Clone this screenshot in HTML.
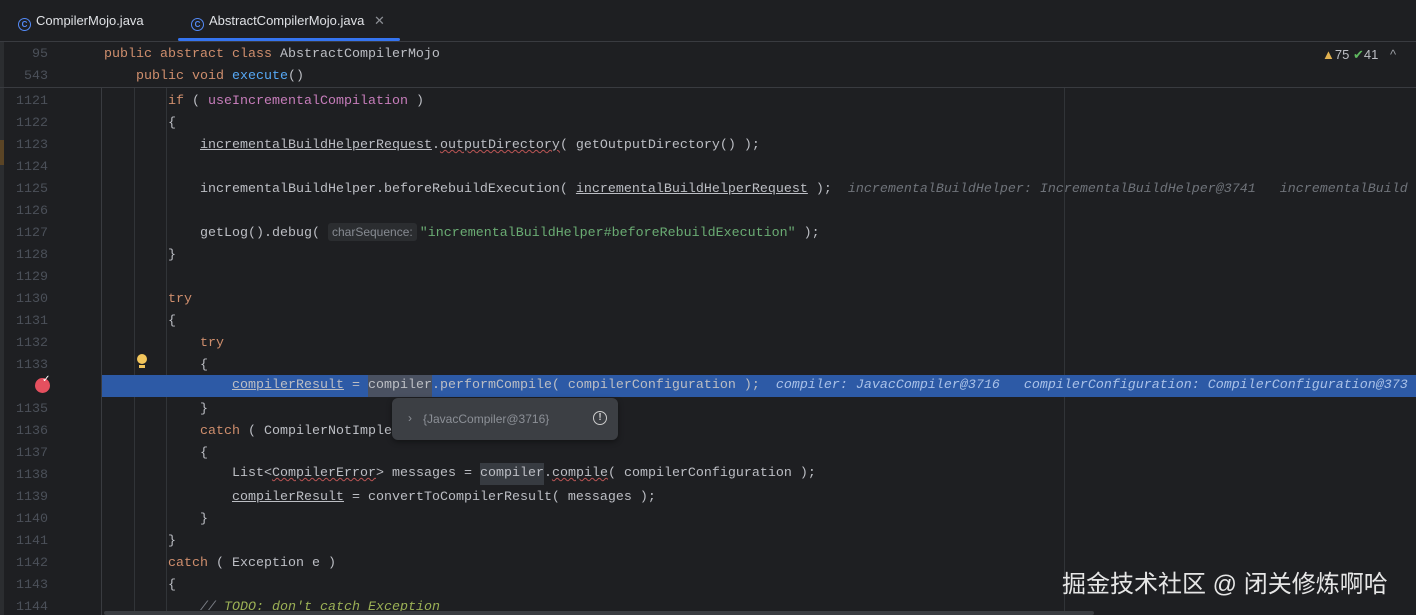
<!DOCTYPE html>
<html style="overflow:hidden"><head><meta charset="utf-8"><style>
body{margin:0;width:1416px;height:615px;overflow:hidden;background:#1e1f22;position:relative;font-family:"Liberation Mono",monospace;font-size:13.33px;color:#bcbec4}
.abs{position:absolute}
.tabs{left:0;top:0;width:1416px;height:41px;background:#1e1f22;border-bottom:1px solid #393b40;font-family:"Liberation Sans",sans-serif;font-size:13px;color:#dfe1e5}
.tab{position:absolute;top:13px;white-space:nowrap}
.ci{display:inline-block;width:11px;height:11px;border:1.3px solid #548af7;border-radius:50%;color:#548af7;font-size:8px;line-height:11px;text-align:center;vertical-align:-2px;margin-right:5px;font-weight:bold}
.ln{position:absolute;left:0;width:48px;text-align:right;color:#4b5059;height:22px;line-height:22px;margin-top:2px}
.l{position:absolute;left:104px;height:22px;line-height:22px;white-space:pre;margin-top:2px}
.k{color:#cf8e6d}.f{color:#c77dbb}.m{color:#56a8f5}.s{color:#6aab73}.u{text-decoration:underline;text-decoration-color:#bcbec4}
.w{text-decoration:underline wavy #b55;text-decoration-thickness:1px}
.h{color:#6f737a;font-style:italic}
.hl{color:#a9c1e8;font-style:italic}
.vl{position:absolute;width:1px;background:#313438}
.hint{display:inline-block;background:#2b2d30;color:#868a91;font-family:"Liberation Sans",sans-serif;font-size:12px;line-height:18px;padding:0 4px;border-radius:3px;margin-right:3px}
</style></head><body>
<div class="abs tabs">
 <div class="tab" style="left:18px"><span class="ci">C</span>CompilerMojo.java</div>
 <div class="tab" style="left:191px"><span class="ci">C</span>AbstractCompilerMojo.java <span style="color:#8b8e94;margin-left:6px">✕</span></div>
 <div class="abs" style="left:178px;top:38px;width:222px;height:3px;background:#3574f0;border-radius:2px"></div>
</div>
<div class="abs" style="left:0;top:42px;width:4px;height:573px;background:#2b2d30"></div>
<div class="abs" style="left:0;top:140px;width:4px;height:25px;background:#5a4425"></div>
<div class="ln" style="top:42px">95</div>
<div class="l" style="top:42px"><span class="k">public abstract class</span> AbstractCompilerMojo</div>
<div class="ln" style="top:64px">543</div>
<div class="l" style="top:64px;left:136px"><span class="k">public void</span> <span class="m">execute</span>()</div>
<div class="abs" style="left:0;top:87px;width:1416px;height:1px;background:#393b40"></div>
<div class="abs" style="left:1322px;top:47px;font-family:'Liberation Sans',sans-serif;font-size:13px;color:#bcbec4"><span style="color:#e0b050">▲</span>75 <span style="color:#5fb85f">✔</span>41 <span style="color:#9a9da3;margin-left:8px">^</span></div>
<div class="vl" style="left:101px;top:88px;height:527px;background:#393b40"></div>
<div class="vl" style="left:134px;top:88px;height:527px"></div>
<div class="vl" style="left:166px;top:88px;height:527px"></div>
<div class="vl" style="left:1064px;top:88px;height:527px"></div>
<div class="abs" style="left:102px;top:375px;width:1314px;height:22px;background:#2d5aa6"></div>
<div class="abs" style="left:368px;top:375px;width:64px;height:22px;background:#4a5161"></div>
<div class="abs" style="left:480px;top:463px;width:64px;height:22px;background:#373b41"></div>

<div class="ln" style="top:89px">1121</div><div class="l" style="top:89px;left:168px"><span class="k">if</span> ( <span class="f">useIncrementalCompilation</span> )</div>
<div class="ln" style="top:111px">1122</div><div class="l" style="top:111px;left:168px">{</div>
<div class="ln" style="top:133px">1123</div><div class="l" style="top:133px;left:200px"><span class="u">incrementalBuildHelperRequest</span>.<span class="w">outputDirectory</span>( getOutputDirectory() );</div>
<div class="ln" style="top:155px">1124</div>
<div class="ln" style="top:177px">1125</div><div class="l" style="top:177px;left:200px">incrementalBuildHelper.beforeRebuildExecution( <span class="u">incrementalBuildHelperRequest</span> );  <span class="h">incrementalBuildHelper: IncrementalBuildHelper@3741   incrementalBuild</span></div>
<div class="ln" style="top:199px">1126</div>
<div class="ln" style="top:221px">1127</div><div class="l" style="top:221px;left:200px">getLog().debug( <span class="hint">charSequence:</span><span class="s">"incrementalBuildHelper#beforeRebuildExecution"</span> );</div>
<div class="ln" style="top:243px">1128</div><div class="l" style="top:243px;left:168px">}</div>
<div class="ln" style="top:265px">1129</div>
<div class="ln" style="top:287px">1130</div><div class="l" style="top:287px;left:168px"><span class="k">try</span></div>
<div class="ln" style="top:309px">1131</div><div class="l" style="top:309px;left:168px">{</div>
<div class="ln" style="top:331px">1132</div><div class="l" style="top:331px;left:200px"><span class="k">try</span></div>
<div class="ln" style="top:353px">1133</div><div class="l" style="top:353px;left:200px">{</div>
<div class="abs" style="left:137px;top:354px;width:10px;height:10px;border-radius:50%;background:#f2c55c"></div>
<div class="abs" style="left:139px;top:365px;width:6px;height:3px;background:#f2c55c"></div>
<div class="abs" style="left:35px;top:378px;width:15px;height:15px;border-radius:50%;background:#e5505f"></div>
<div class="abs" style="left:42px;top:374px;color:#fff;font-size:10px;font-family:'DejaVu Sans',sans-serif">✓</div>
<div class="l" style="top:373px;left:232px"><span class="u">compilerResult</span> = compiler.performCompile( compilerConfiguration );  <span class="hl">compiler: JavacCompiler@3716   compilerConfiguration: CompilerConfiguration@373</span></div>
<div class="ln" style="top:397px">1135</div><div class="l" style="top:397px;left:200px">}</div>
<div class="ln" style="top:419px">1136</div><div class="l" style="top:419px;left:200px"><span class="k">catch</span> ( CompilerNotImplementedException cnie )</div>
<div class="ln" style="top:441px">1137</div><div class="l" style="top:441px;left:200px">{</div>
<div class="ln" style="top:463px">1138</div><div class="l" style="top:461px;left:232px">List&lt;<span class="w">CompilerError</span>&gt; messages = compiler.<span class="w">compile</span>( compilerConfiguration );</div>
<div class="ln" style="top:485px">1139</div><div class="l" style="top:485px;left:232px"><span class="u">compilerResult</span> = convertToCompilerResult( messages );</div>
<div class="ln" style="top:507px">1140</div><div class="l" style="top:507px;left:200px">}</div>
<div class="ln" style="top:529px">1141</div><div class="l" style="top:529px;left:168px">}</div>
<div class="ln" style="top:551px">1142</div><div class="l" style="top:551px;left:168px"><span class="k">catch</span> ( Exception e )</div>
<div class="ln" style="top:573px">1143</div><div class="l" style="top:573px;left:168px">{</div>
<div class="ln" style="top:595px">1144</div><div class="l" style="top:595px;left:200px;font-style:italic"><span style="color:#7a7e85">// </span><span style="color:#9bb055">TODO: don't catch Exception</span></div>
<div class="abs" style="left:392px;top:398px;width:226px;height:42px;background:#3c3f44;border-radius:6px;box-shadow:0 2px 6px rgba(0,0,0,.4);font-family:'Liberation Sans',sans-serif;font-size:12px;color:#8c9097">
 <span class="abs" style="left:16px;top:13px">›</span>
 <span class="abs" style="left:31px;top:14px">{JavacCompiler@3716}</span>
 <span class="abs" style="left:201px;top:13px;width:12px;height:12px;border:1.3px solid #ccc;border-radius:50%;color:#ccc;font-size:10px;line-height:12px;text-align:center;font-weight:bold">!</span>
</div>
<div class="abs" style="left:104px;top:611px;width:990px;height:4px;background:#3a3d41;border-radius:2px"></div>
<div class="abs" style="left:1062px;top:564px;font-family:'Liberation Sans','Noto Sans CJK SC',sans-serif;font-size:24px;color:#e6e6e6;white-space:nowrap">掘金技术社区 @ 闭关修炼啊哈</div>
</body></html>
